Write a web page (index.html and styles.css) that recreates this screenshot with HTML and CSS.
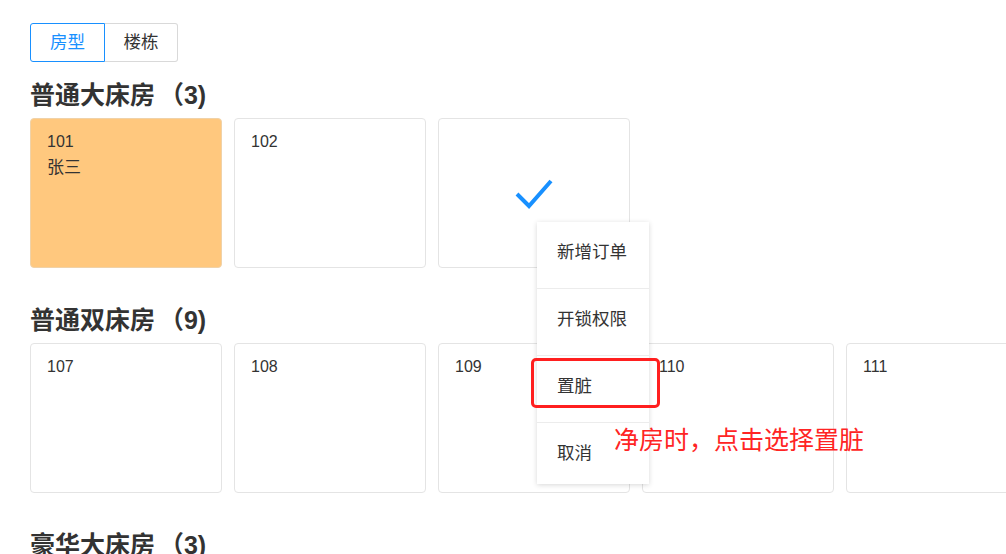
FILE: index.html
```html
<!DOCTYPE html>
<html lang="zh-CN">
<head>
<meta charset="utf-8">
<link rel="stylesheet" href="styles.css">
</head>
<body>
<div class="page">
  <div class="tabs">
    <div class="tab active">房型</div>
    <div class="tab">楼栋</div>
  </div>

  <section class="group">
    <h2 class="group-title">普通大床房 （3)</h2>
    <div class="rooms">
      <div class="room occupied"><div>101</div><div class="guest">张三</div></div>
      <div class="room"><div>102</div></div>
      <div class="room selected">
        <svg class="check" width="40" height="32" viewBox="0 0 40 32"><path d="M3 16 L15 28 L37 3" fill="none" stroke="#1890ff" stroke-width="4" stroke-linejoin="miter"/></svg>
        <div class="menu">
          <div class="menu-item">新增订单</div>
          <div class="menu-item">开锁权限</div>
          <div class="menu-item">置脏</div>
          <div class="menu-item last">取消</div>
          <div class="highlight"></div>
          <div class="note">净房时，点击选择置脏</div>
        </div>
      </div>
    </div>
  </section>

  <section class="group">
    <h2 class="group-title">普通双床房 （9)</h2>
    <div class="rooms">
      <div class="room"><div>107</div></div>
      <div class="room"><div>108</div></div>
      <div class="room"><div>109</div></div>
      <div class="room"><div>110</div></div>
      <div class="room"><div>111</div></div>
    </div>
  </section>

  <section class="group">
    <h2 class="group-title">豪华大床房 （3)</h2>
  </section>
</div>
</body>
</html>
```

FILE: styles.css
```css
html, body {
  margin: 0;
  padding: 0;
  overflow: hidden;
  background: #fff;
}
body {
  font-family: "Liberation Sans", "Noto Sans CJK SC", sans-serif;
  color: #333;
}
.page {
  padding: 23px 0 0 30px;
}
.tabs {
  display: flex;
}
.tab {
  height: 37px;
  line-height: 37px;
  padding: 0 18.5px;
  font-size: 17.5px;
  color: #333;
  border: 1px solid #d9d9d9;
  border-left: none;
  border-radius: 0 3px 3px 0;
}
.tab.active {
  padding: 0 19px;
  color: #1890ff;
  border: 1px solid #1890ff;
  border-radius: 3px 0 0 3px;
}
.group {
  margin-top: 18px;
}
.group + .group {
  margin-top: 37px;
}
.group-title {
  margin: 0 0 8px;
  font-size: 25px;
  line-height: 30px;
  font-weight: bold;
  color: #333;
  white-space: nowrap;
  word-spacing: -3px;
}
.rooms {
  display: flex;
  gap: 12px;
}
.room {
  position: relative;
  flex: 0 0 auto;
  box-sizing: border-box;
  width: 192px;
  height: 150px;
  padding: 10px 16px;
  border: 1px solid #e4e4e4;
  border-radius: 4px;
  font-size: 16px;
  line-height: 26px;
  color: #333;
  background: #fff;
}
.guest {
  font-size: 17px;
}
.room.occupied {
  background: #ffc87e;
  border-color: #f0d2a8;
}
.room.selected {
  display: flex;
  justify-content: center;
  align-items: center;
  padding-top: 12px;
  z-index: 2;
}
.check {
  display: block;
}
.menu {
  position: absolute;
  left: 98px;
  top: 103px;
  width: 112px;
  background: #fff;
  box-shadow: 0 1px 5px rgba(0, 0, 0, 0.16);
}
.menu-item {
  height: 66px;
  line-height: 60px;
  padding-left: 20px;
  font-size: 17.5px;
  color: #333;
  white-space: nowrap;
}
.menu-item.last {
  height: 61px;
}
.menu-item + .menu-item {
  border-top: 1px solid #ececec;
}
.highlight {
  position: absolute;
  left: -6px;
  top: 136px;
  width: 123px;
  height: 44px;
  border: 3px solid #ff1f1f;
  border-radius: 5px;
}
.note {
  position: absolute;
  left: 77px;
  top: 199px;
  font-size: 25px;
  line-height: 34px;
  color: #ff2424;
  white-space: nowrap;
  font-family: "Noto Sans CJK SC", sans-serif;
}
```
